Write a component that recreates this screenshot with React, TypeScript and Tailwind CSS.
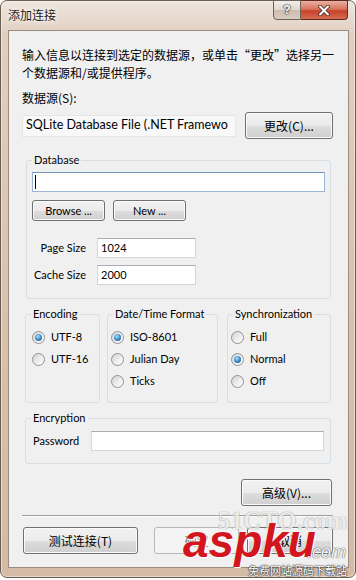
import React from 'react';

type BtnProps = { children: React.ReactNode; className?: string; disabled?: boolean };

const Btn = ({ children, className = '', disabled = false }: BtnProps) => (
  <button
    type="button"
    className={`flex items-center justify-center whitespace-nowrap rounded-[3px] border leading-none ${
      disabled
        ? 'border-[#b5b8ba] bg-[#f4f4f4] text-[#8a8a8a]'
        : 'border-[#707070] bg-[linear-gradient(to_bottom,#f2f2f2_0%,#ebebeb_50%,#dddddd_51%,#cfcfcf_100%)] text-black shadow-[inset_0_0_0_1px_#fbfbfb]'
    } ${className}`}
  >
    {children}
  </button>
);

const TextBox = ({ value, className = '' }: { value: string; className?: string }) => (
  <div
    className={`flex h-[20px] items-center border border-[#d3d6db] border-t-[#abadb3] bg-white pl-[3px] ${className}`}
  >
    {value}
  </div>
);

const Radio = ({ label, checked = false }: { label: string; checked?: boolean }) => (
  <div className="flex h-[22px] items-center gap-[6px] whitespace-nowrap">
    <span className="flex h-[13px] w-[13px] shrink-0 items-center justify-center rounded-full border border-[#929292] bg-[linear-gradient(135deg,#d2d2d2_0%,#f0f0f0_60%,#ffffff_100%)]">
      {checked && (
        <span className="h-[7px] w-[7px] rounded-full bg-[radial-gradient(circle_at_40%_35%,#a9def9_0%,#3d8ecf_50%,#164775_100%)]" />
      )}
    </span>
    <span>{label}</span>
  </div>
);

const Group = ({
  title,
  className = '',
  children,
}: {
  title: string;
  className?: string;
  children: React.ReactNode;
}) => (
  <fieldset className={`rounded-[3px] border border-[#d5dfe5] ${className}`}>
    <legend className="ml-[5px] whitespace-nowrap px-[2px] leading-[16px]">{title}</legend>
    {children}
  </fieldset>
);

export default function App() {
  return (
    <div className="relative h-[580px] w-[356px] overflow-hidden bg-white font-['Lato','Noto_Sans_CJK_SC',sans-serif] text-[11px] text-black">
      {/* window frame */}
      <div className="flex h-[578px] flex-col rounded-[7px] border border-[#6b5d52] bg-[linear-gradient(to_bottom,#eee6de_0%,#e0cfc0_6%,#d8c0ab_60%,#d4bba6_100%)] shadow-[inset_0_0_0_1px_rgba(255,255,255,0.45)]">
        {/* title bar */}
        <div className="flex h-[29px] shrink-0 items-start">
          <span className="ml-[7px] mt-[6px] font-['Noto_Sans_CJK_SC',sans-serif] text-[12px] leading-[16px] text-[#1b1b1b] [text-shadow:0_0_6px_#fff,0_0_3px_#fff]">
            添加连接
          </span>
          <div className="-mt-px ml-auto mr-[7px] flex">
            <div className="flex h-[20px] w-[28px] items-center justify-center rounded-bl-[4px] border border-[#6e6259] bg-[linear-gradient(to_bottom,#f3efeb_0%,#e0d6cd_50%,#cbbcae_51%,#d8ccc1_100%)] font-['Liberation_Sans',sans-serif] text-[13px] font-bold text-white [text-shadow:0_0_1px_#2e2520,0_0_1px_#2e2520,0_0_2px_#2e2520]">
              ?
            </div>
            <div className="flex h-[20px] w-[47px] items-center justify-center rounded-br-[4px] border border-l-0 border-[#5e2b20] bg-[linear-gradient(to_bottom,#eab0a2_0%,#d9765f_45%,#c7432c_55%,#d66a4f_100%)]">
              <svg width="12" height="11" viewBox="0 0 12 11">
                <path d="M2 1.5 L10 9.5 M10 1.5 L2 9.5" stroke="#3a2620" strokeWidth="3.6" strokeLinecap="round" />
                <path d="M2 1.5 L10 9.5 M10 1.5 L2 9.5" stroke="#ffffff" strokeWidth="2" strokeLinecap="round" />
              </svg>
            </div>
          </div>
        </div>

        {/* client area */}
        <div className="ml-[7px] mr-[6px] mb-[9px] flex flex-1 flex-col border border-[#9a8c80] bg-[#f0f0f0] px-[13px] pt-[15px]">
          <p className="font-['Noto_Sans_CJK_SC',sans-serif] text-[12px] leading-[18px]">
            输入信息以连接到选定的数据源，或单击“更改”选择另一
            <br />
            个数据源和/或提供程序。
          </p>
          <p className="mt-[7px] font-['Noto_Sans_CJK_SC',sans-serif] text-[12px] leading-[18px]">数据源(S):</p>

          <div className="mt-[5px] flex h-[27px] items-center gap-[9px]">
            <div className="flex h-[22px] w-[214px] items-center overflow-hidden whitespace-nowrap border border-[#e6e6e6] bg-[#f8f8f8] pl-[3px] text-[12.5px]">
              SQLite Database File (.NET Framewo
            </div>
            <Btn className="h-[27px] w-[88px] font-['Noto_Sans_CJK_SC',sans-serif] text-[12px]">更改(C)...</Btn>
          </div>

          {/* Database */}
          <Group title="Database" className="ml-[4px] mt-[13px] w-[305px]">
            <div className="px-[5px] pt-[4px] pb-[13px]">
              <div className="relative h-[20px] border border-[#9ab8d6] border-t-[#6f95bb] bg-white">
                <span className="absolute left-[2px] top-[2px] h-[14px] w-px bg-black" />
              </div>
              <div className="mt-[8px] flex gap-[8px]">
                <Btn className="h-[21px] w-[73px]">Browse ...</Btn>
                <Btn className="h-[21px] w-[73px]">New ...</Btn>
              </div>
              <div className="mt-[17px] grid grid-cols-[54px_99px] items-center gap-x-[11px] gap-y-[7px]">
                <span className="whitespace-nowrap text-right">Page Size</span>
                <TextBox value="1024" />
                <span className="whitespace-nowrap text-right">Cache Size</span>
                <TextBox value="2000" />
              </div>
            </div>
          </Group>

          {/* option groups */}
          <div className="ml-[3px] mt-[7px] flex items-stretch">
            <Group title="Encoding" className="w-[75px]">
              <div className="pl-[6px] pt-[4px] pb-[10px]">
                <Radio label="UTF-8" checked />
                <Radio label="UTF-16" />
              </div>
            </Group>
            <Group title="Date/Time Format" className="ml-[7px] w-[111px]">
              <div className="pl-[3px] pt-[4px] pb-[10px]">
                <Radio label="ISO-8601" checked />
                <Radio label="Julian Day" />
                <Radio label="Ticks" />
              </div>
            </Group>
            <Group title="Synchronization" className="ml-[9px] w-[104px]">
              <div className="pl-[3px] pt-[4px] pb-[10px]">
                <Radio label="Full" />
                <Radio label="Normal" checked />
                <Radio label="Off" />
              </div>
            </Group>
          </div>

          {/* Encryption */}
          <Group title="Encryption" className="ml-[3px] mt-[7px] w-[306px]">
            <div className="flex items-center pl-[7px] pr-[6px] pt-[5px] pb-[12px]">
              <span className="w-[58px]">Password</span>
              <TextBox value="" className="flex-1" />
            </div>
          </Group>

          <div className="mr-[3px] mt-[15px] flex justify-end">
            <Btn className="h-[27px] w-[91px] font-['Noto_Sans_CJK_SC',sans-serif] text-[12px]">高级(V)...</Btn>
          </div>

          <div className="mr-[2px] mt-[9px] border-t border-b border-t-[#a0a0a0] border-b-white" />

          <div className="ml-[1px] mt-[10px] flex font-['Noto_Sans_CJK_SC',sans-serif] text-[12px]">
            <Btn className="h-[27px] w-[115px]">测试连接(T)</Btn>
            <Btn className="ml-[16px] h-[27px] w-[85px]" disabled>
              确定
            </Btn>
            <Btn className="ml-[8px] h-[27px] w-[86px]">取消</Btn>
          </div>
        </div>
      </div>

      {/* watermark overlays */}
      <span className="pointer-events-none absolute left-[218px] top-[508px] font-['Liberation_Serif',serif] text-[25px] font-bold leading-none text-[#ececec] opacity-80 [text-shadow:0_0_1px_#9a9a9a,0_0_1px_#9a9a9a]">
        51CTO.com
      </span>
      <span className="pointer-events-none absolute left-[183px] top-[518px] font-['Liberation_Sans',sans-serif] text-[46px] font-bold italic leading-[46px] text-[#d3151d] [text-shadow:0_0_1px_#fff,1px_1px_0_#fff]">
        aspku
      </span>
      <span className="pointer-events-none absolute left-[307px] top-[543px] font-['Liberation_Sans',sans-serif] text-[18px] italic leading-[18px] text-[#f4f4f4] [text-shadow:0_0_1px_#555,0_0_1px_#555]">
        .com
      </span>
      <span className="pointer-events-none absolute left-[248px] top-[564px] font-['Noto_Sans_CJK_SC',sans-serif] text-[11px] leading-[12px] text-white [text-shadow:0_0_1px_#333,0_0_1px_#333,0_0_2px_#333]">
        免费网站源码下载站
      </span>
    </div>
  );
}
